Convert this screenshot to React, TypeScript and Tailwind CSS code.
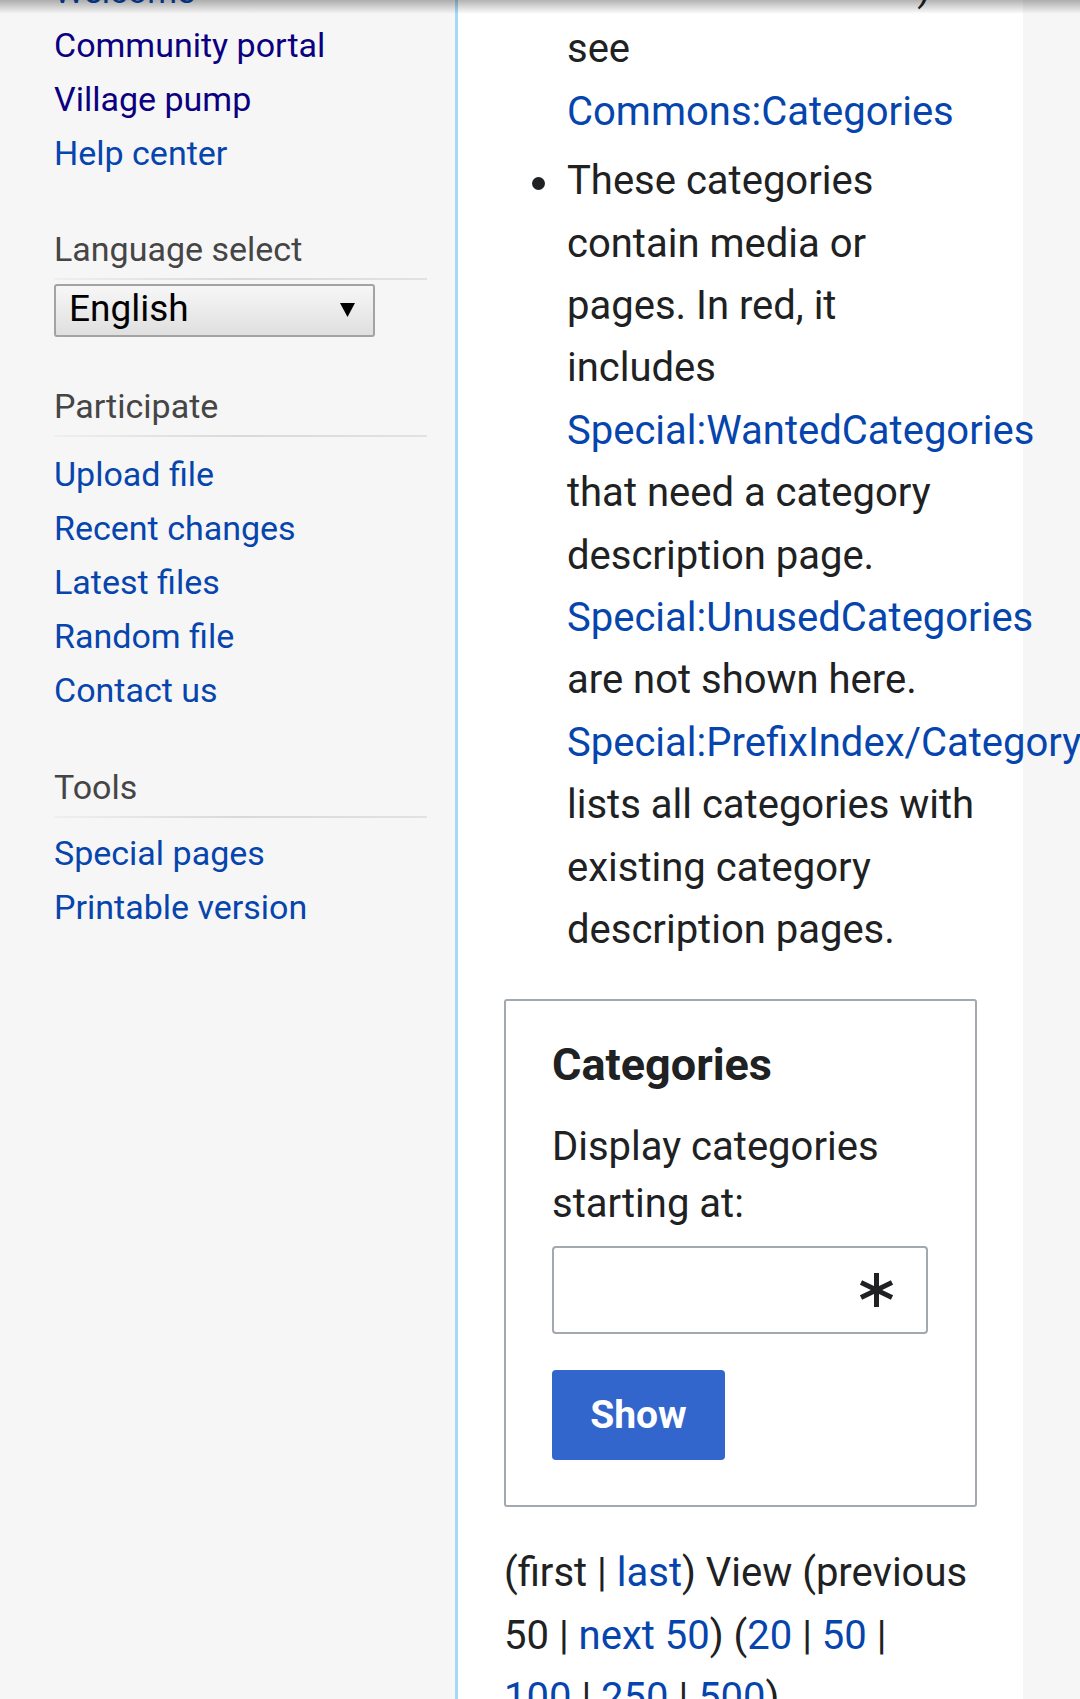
const LINK = 'text-[#0645ad]';
const VISITED = 'text-[#0b0080]';

function SectionHeading({ title, className = '' }: { title: string; className?: string }) {
  return (
    <div className={className}>
      <h3 className="text-[34px] leading-[54px] font-normal text-[#454545]">{title}</h3>
      <div className="mt-[2px] h-[2px] w-[373px] bg-linear-to-r from-[#efefef] via-[#d9d9d9] to-[#e2e2e2]" />
    </div>
  );
}

function Sidebar() {
  return (
    <aside className="w-[458px] shrink-0 border-r-[3px] border-[#a7d7f9] bg-[#f6f6f6] pl-[54px] text-[34px] leading-[54px]">
      <ul className="-mt-[36px]">
        <li className={LINK}>Welcome</li>
        <li className={VISITED}>Community portal</li>
        <li className={VISITED}>Village pump</li>
        <li className={LINK}>Help center</li>
      </ul>

      <SectionHeading title="Language select" className="mt-[42px]" />
      <div className="mt-[4px] flex h-[53px] w-[321px] items-center justify-between rounded-[3px] border-2 border-[#a3a3a3] bg-linear-to-b from-[#f7f7f7] to-[#dfdfdf] pl-[13px] pr-[18px]">
        <span className="-mt-[4px] text-[37px] leading-[45px] text-black">English</span>
        <svg width="15" height="14" viewBox="0 0 15 14" className="-mt-[2px]">
          <polygon points="0,0 15,0 7.5,14" fill="#000" />
        </svg>
      </div>

      <SectionHeading title="Participate" className="mt-[42px]" />
      <ul className={`mt-[10px] ${LINK}`}>
        <li>Upload file</li>
        <li>Recent changes</li>
        <li>Latest files</li>
        <li>Random file</li>
        <li>Contact us</li>
      </ul>

      <SectionHeading title="Tools" className="mt-[43px]" />
      <ul className={`mt-[8px] ${LINK}`}>
        <li>Special pages</li>
        <li>Printable version</li>
      </ul>
    </aside>
  );
}

function Asterisk() {
  return (
    <svg width="33" height="34" viewBox="0 0 33 34">
      <g stroke="#202122" strokeWidth="5" strokeLinecap="butt">
        <line x1="16.5" y1="0" x2="16.5" y2="34" />
        <line x1="1" y1="9.5" x2="32" y2="24.5" />
        <line x1="32" y1="9.5" x2="1" y2="24.5" />
      </g>
    </svg>
  );
}

function CategoriesBox() {
  return (
    <div className="mt-[37px] w-[473px] rounded-[3px] border-2 border-[#a2a9b1] pb-[45px] pl-[46px] pt-[38px]">
      <h2 className="text-[45px] leading-[52px] font-bold text-[#202122]">Categories</h2>
      <p className="mt-[27px] leading-[57.4px]">
        Display categories
        <br />
        starting at:
      </p>
      <div className="mt-[14px] flex h-[88px] w-[376px] items-center justify-end rounded-[4px] border-2 border-[#a2a9b1] bg-white pr-[33px]">
        <Asterisk />
      </div>
      <button className="mt-[36px] flex h-[90px] w-[173px] items-center justify-center rounded-[4px] bg-[#36c] text-[39px] font-bold text-white">
        Show
      </button>
    </div>
  );
}

function Content() {
  return (
    <main className="w-[565px] shrink-0 bg-white text-[40px] leading-[62.4px] text-[#202122]">
      <div className="-mt-[44px] pl-[46px]">
        <ul>
          <li className="flex">
            <span className="w-[63px] shrink-0" />
            <div className="whitespace-nowrap">
              on how to use them)
              <br />
              see
              <br />
              <a className={LINK}>Commons:Categories</a>
            </div>
          </li>
          <li className="mt-[7px] flex">
            <span className="w-[63px] shrink-0 pl-[28px] pt-[27px]">
              <span className="block h-[13px] w-[13px] rounded-full bg-[#202122]" />
            </span>
            <div className="whitespace-nowrap">
              These categories
              <br />
              contain media or
              <br />
              pages. In red, it
              <br />
              includes
              <br />
              <a className={LINK}>Special:WantedCategories</a>
              <br />
              that need a category
              <br />
              description page.
              <br />
              <a className={LINK}>Special:UnusedCategories</a>
              <br />
              are not shown here.
              <br />
              <a className={LINK}>Special:PrefixIndex/Category:</a>
              <br />
              lists all categories with
              <br />
              existing category
              <br />
              description pages.
            </div>
          </li>
        </ul>

        <CategoriesBox />

        <p className="mt-[35px] whitespace-nowrap">
          (first | <a className={LINK}>last</a>) View (previous
          <br />
          50 | <a className={LINK}>next 50</a>) (<a className={LINK}>20</a> | <a className={LINK}>50</a> |
          <br />
          <a className={LINK}>100</a> | <a className={LINK}>250</a> | <a className={LINK}>500</a>)
        </p>
      </div>
    </main>
  );
}

export default function App() {
  return (
    <div className="relative flex h-[1699px] w-[1080px] overflow-hidden bg-[#f6f6f6] font-[Roboto,sans-serif]">
      <Sidebar />
      <Content />
      <div className="pointer-events-none absolute inset-x-0 top-0 h-[14px] bg-linear-to-b from-black/30 to-transparent" />
    </div>
  );
}
